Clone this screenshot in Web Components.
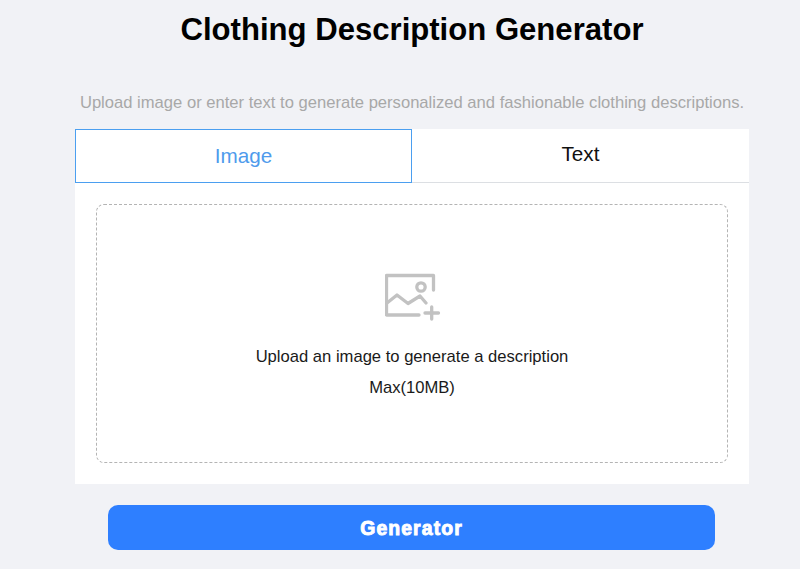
<!DOCTYPE html>
<html>
<head>
<meta charset="utf-8">
<title>Clothing Description Generator</title>
<style>
    html, body { margin: 0; height: 100%; }
    body {
        background: #f1f2f6;
        font-family: "Liberation Sans", Arial, sans-serif;
        overflow: hidden;
    }
</style>
</head>
<body>
<desc-generator></desc-generator>

<script>
class UploadTabs extends HTMLElement {

    constructor() {
        super();
        this.attachShadow({ mode: 'open' });
        this.shadowRoot.innerHTML = `
        <style>
        :host {
            display: grid;
            grid-template-columns: 337px 1fr;
            height: 54px;
            box-sizing: border-box;
            border-bottom: 1px solid #dcdfe3;
            font-size: 20.7px;
        }
        .tab {
            display: flex;
            align-items: center;
            justify-content: center;
            color: #111;
        }
        .tab--active {
            height: 54px;
            box-sizing: border-box;
            border: 1px solid #4b9ff0;
            color: #4f9bec;
            padding-bottom: 1px;
        }
        .tab--plain {
            padding-bottom: 5px;
        }
        </style>
        <div class="tab tab--active">Image</div>
        <div class="tab tab--plain">Text</div>`;
    }

}

class UploadZone extends HTMLElement {

    constructor() {
        super();
        this.attachShadow({ mode: 'open' });
        this.shadowRoot.innerHTML = `
        <style>
        :host {
            display: flex;
            flex-direction: column;
            align-items: center;
            height: 259px;
            box-sizing: border-box;
            border: 1px dashed #b4b4b4;
            border-radius: 8px;
            padding-top: 68px;
            color: #1a1a1a;
            font-size: 16.6px;
        }
        svg {
            display: block;
            width: 56px;
            height: 48px;
            margin-left: 1px;
        }
        p {
            margin: 0;
            line-height: 20px;
        }
        .title { margin-top: 26px; }
        .limit { margin-top: 11px; }
        </style>
        <svg viewBox="0 0 56 48" fill="none" stroke="#c2c2c2" stroke-width="3.3" stroke-linecap="round" stroke-linejoin="round">
            <path d="M48.5 17V2.5H1.5V42H34"/>
            <circle cx="36" cy="14" r="4.2"/>
            <path d="M2 30L12 22L23 30.5L35 23L41 30"/>
            <path d="M46.7 34V46M40 40H53.5"/>
        </svg>
        <p class="title"><slot name="title"></slot></p>
        <p class="limit"><slot name="limit"></slot></p>`;
    }

}

class GenerateButton extends HTMLElement {

    constructor() {
        super();
        this.attachShadow({ mode: 'open' });
        this.shadowRoot.innerHTML = `
        <style>
        :host {
            display: flex;
            align-items: center;
            justify-content: center;
            width: 607px;
            height: 45px;
            padding-top: 1px;
            box-sizing: border-box;
            background: #2e7fff;
            border-radius: 10px;
            color: #fff;
            font-size: 19.4px;
            font-weight: 700;
            -webkit-text-stroke: 0.9px #fff;
            letter-spacing: 1.1px;
        }
        </style>
        <slot></slot>`;
    }

}

class DescGenerator extends HTMLElement {

    constructor() {
        super();
        this.attachShadow({ mode: 'open' });
        this.shadowRoot.innerHTML = `
        <style>
        :host {
            display: flex;
            flex-direction: column;
            align-items: center;
            width: 674px;
            margin-left: 75px;
        }
        h1 {
            margin: 11px 0 0;
            font-size: 31.1px;
            line-height: 38px;
            font-weight: 700;
            color: #000;
            white-space: nowrap;
        }
        .sub {
            margin: 44px 0 0;
            font-size: 16.6px;
            line-height: 20px;
            color: #a8a8a8;
            white-space: nowrap;
        }
        .card {
            align-self: stretch;
            margin-top: 16px;
            height: 355px;
            background: #fff;
        }
        .card__body {
            padding: 21px 21px 0;
        }
        generate-button {
            align-self: flex-start;
            margin: 21px 0 0 33px;
        }
        </style>
        <h1>Clothing Description Generator</h1>
        <p class="sub">Upload image or enter text to generate personalized and fashionable clothing descriptions.</p>
        <div class="card">
            <upload-tabs></upload-tabs>
            <div class="card__body">
                <upload-zone>
                    <span slot="title">Upload an image to generate a description</span>
                    <span slot="limit">Max(10MB)</span>
                </upload-zone>
            </div>
        </div>
        <generate-button>Generator</generate-button>`;
    }

}

customElements.define('upload-tabs', UploadTabs);
customElements.define('upload-zone', UploadZone);
customElements.define('generate-button', GenerateButton);
customElements.define('desc-generator', DescGenerator);
</script>
</body>
</html>
